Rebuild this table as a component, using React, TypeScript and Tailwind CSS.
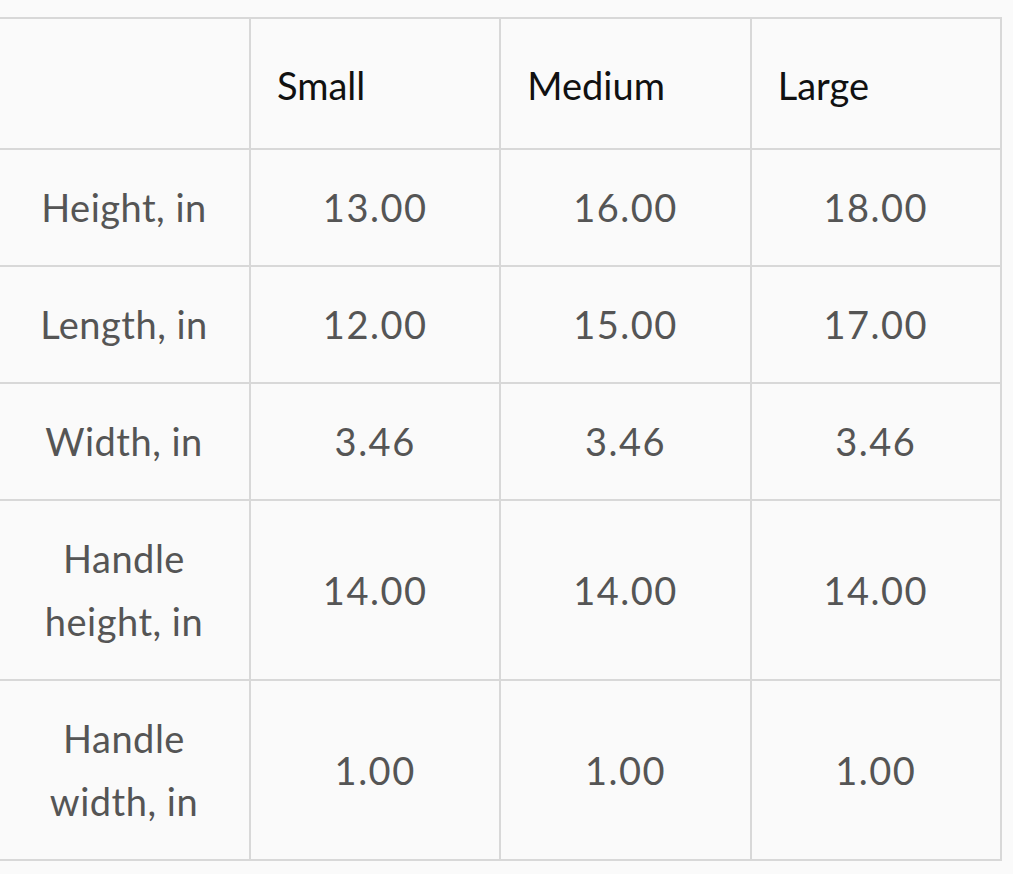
import React from "react"

const sizes = ["Small", "Medium", "Large"]

const rows: { label: string; values: string[] }[] = [
  { label: "Height, in", values: ["13.00", "16.00", "18.00"] },
  { label: "Length, in", values: ["12.00", "15.00", "17.00"] },
  { label: "Width, in", values: ["3.46", "3.46", "3.46"] },
  { label: "Handle height, in", values: ["14.00", "14.00", "14.00"] },
  { label: "Handle width, in", values: ["1.00", "1.00", "1.00"] },
]

export default function App() {
  return (
    <div className="min-h-[874px] w-[1013px] bg-[#fafafa] pt-[17px] overflow-hidden font-['Lato',sans-serif]">
      <table className="-ml-[3px] w-[1005px] table-fixed border-collapse text-[38px] leading-[63px]">
        <thead>
          <tr className="h-[131px]">
            <th className="w-[252px] border-2 border-[#d8d8d8]" />
            {sizes.map((s) => (
              <th
                key={s}
                className="border-2 border-[#d8d8d8] px-[26px] pt-[4px] text-left font-normal text-[#111]"
              >
                {s}
              </th>
            ))}
          </tr>
        </thead>
        <tbody>
          {rows.map((r) => (
            <tr key={r.label}>
              <td className="border-2 border-[#d8d8d8] px-[40px] py-[26px] text-center tracking-[0.5px] text-[#555]">
                {r.label}
              </td>
              {r.values.map((v, i) => (
                <td
                  key={i}
                  className="border-2 border-[#d8d8d8] py-[26px] text-center tracking-[1.5px] text-[#555]"
                >
                  {v}
                </td>
              ))}
            </tr>
          ))}
        </tbody>
      </table>
    </div>
  )
}
